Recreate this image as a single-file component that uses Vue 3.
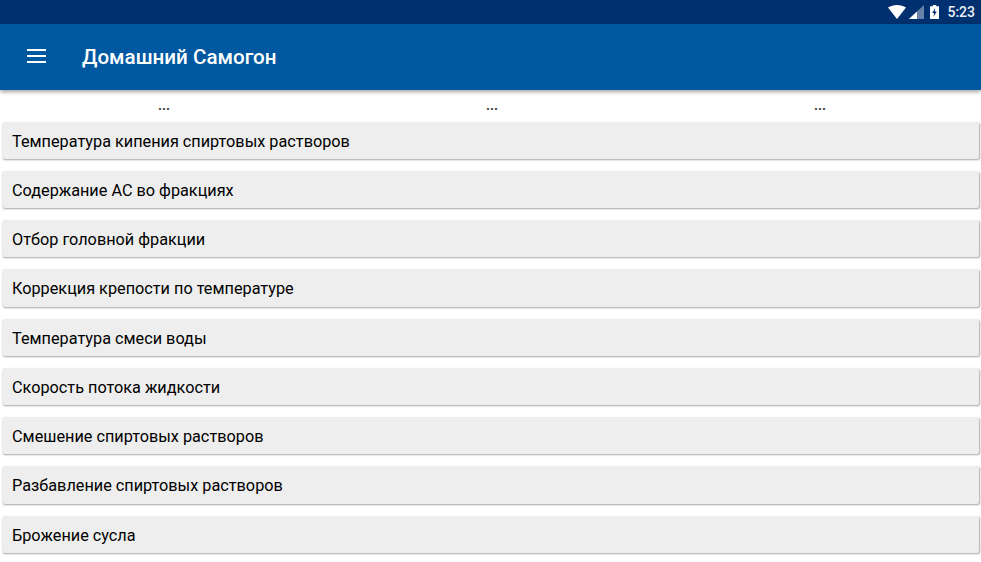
<template>
  <div class="screen">
    <div class="status">
      <svg class="wifi" width="18" height="14" viewBox="0 0 18 14"><path d="M0 2.500C2.500 .9 5.600 0 9 0s6.500 .9 9 2.500L9 14z" fill="#fff"/></svg>
      <svg class="signal" width="15" height="14" viewBox="0 0 15 14"><path d="M15 0v14H0z" fill="#fff" fill-opacity=".4"/><path d="M8 6.500V14H0z" fill="#fff"/></svg>
      <svg class="battery" width="9" height="14" viewBox="0 0 9 14"><path d="M2.800 0h3.400v1.300H9V14H0V1.300h2.800z" fill="#fff"/><path d="M5.200 3 2.200 8h1.900l-.6 3.800L6.800 6.500H4.800z" fill="#00306f"/></svg>
      <span class="time">5:23</span>
    </div>
    <header class="toolbar">
      <svg class="menu" width="19" height="14" viewBox="0 0 19 14"><path d="M0 0h19v2H0zM0 6h19v2H0zM0 12h19v2H0z" fill="#fff"/></svg>
      <h1>Домашний Самогон</h1>
    </header>
    <div class="tabs">
      <span v-for="n in 3" :key="n">...</span>
    </div>
    <div class="list">
      <button v-for="item in items" :key="item" class="item">{{ item }}</button>
    </div>
  </div>
</template>

<script setup>
const items = [
  'Температура кипения спиртовых растворов',
  'Содержание АС во фракциях',
  'Отбор головной фракции',
  'Коррекция крепости по температуре',
  'Температура смеси воды',
  'Скорость потока жидкости',
  'Смешение спиртовых растворов',
  'Разбавление спиртовых растворов',
  'Брожение сусла'
]
</script>

<style>
html, body { margin: 0; background: #fff; overflow: hidden; }
</style>

<style scoped>
.screen { width: 981px; height: 562px; font-family: Roboto, "Liberation Sans", sans-serif; overflow: hidden; }
.status { height: 24px; background: #00306f; display: flex; align-items: center; justify-content: flex-end; color: #fff; }
.wifi { margin-right: 3px; }
.signal { margin-right: 6px; }
.battery { margin-right: 8px; }
.time { font-size: 14px; font-weight: 500; margin-right: 6px; opacity: .92; }
.toolbar { height: 66px; background: #0058a0; display: flex; align-items: center; padding-left: 27px; box-shadow: 0 2px 4px rgba(0, 0, 0, .35); position: relative; }
.menu { margin-right: 36px; margin-top: -2px; }
h1 { margin: 0; font-size: 20.6px; font-weight: 500; color: #fff; }
.tabs { display: grid; grid-template-columns: repeat(3, 328px); height: 31.52px; }
.tabs span { text-align: center; font-size: 14px; font-weight: 700; color: #444; line-height: 30px; }
.list { display: flex; flex-direction: column; gap: 12px; padding: 0 2px 0 3px; }
.item { height: 37.28px; padding: 1.8px 0 0 9px; border: 0; border-radius: 2px; background: #eeeeee; box-shadow: 0.5px 1px 2px rgba(0, 0, 0, .35); text-align: left; font: 400 16.25px Roboto, "Liberation Sans", sans-serif; color: #000; }
</style>
